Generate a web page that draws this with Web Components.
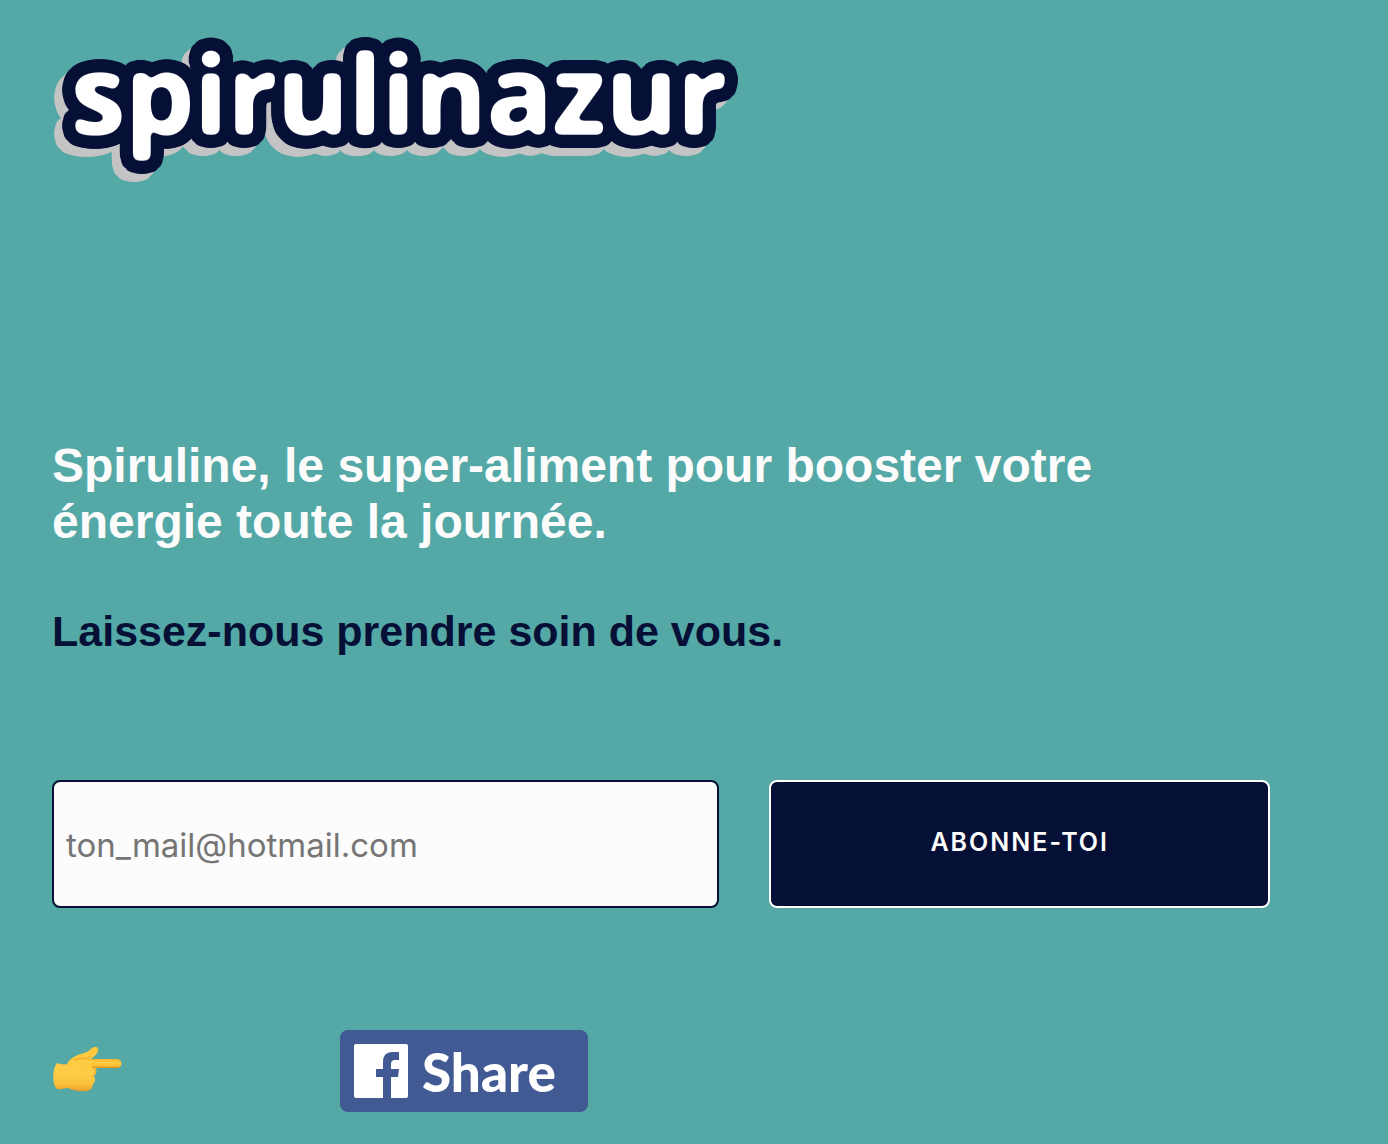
<!DOCTYPE html>
<html lang="fr">
<head>
<meta charset="utf-8">
<meta name="viewport" content="width=device-width, initial-scale=1">
<title>Spirulinazur</title>
<style>
  :root { --teal: #54a8a5; --navy: #060f36; --paper: #fcfcfc; }
  body { margin: 0; background: var(--teal); font-family: "Liberation Sans", Arial, sans-serif; }
</style>
</head>
<body>
<landing-page>
  <brand-logo slot="logo"></brand-logo>
  <hero-copy slot="hero">
    <span>Spiruline, le super-aliment pour booster votre énergie toute la journée.</span>
    <span slot="tagline">Laissez-nous prendre soin de vous.</span>
  </hero-copy>
  <subscribe-form slot="form">Abonne-toi</subscribe-form>
  <share-row slot="share">Share</share-row>
</landing-page>
<script>
class ShadowElement extends HTMLElement {
  constructor() {
    super();
    this.attachShadow({ mode: "open" }).innerHTML = this.constructor.markup;
  }
}

customElements.define("landing-page", class extends ShadowElement {
  static markup = `
    <style>
      :host { display: block; }
      main { display: flex; flex-direction: column; box-sizing: border-box; max-width: 1322px; padding: 24px 52px 32px; }
      header { margin-bottom: 248px; }
      .form { margin: 124px 0 122px; }
    </style>
    <main>
      <header><slot name="logo"></slot></header>
      <slot name="hero"></slot>
      <div class="form"><slot name="form"></slot></div>
      <slot name="share"></slot>
    </main>`;
});

// Copies of the letters on two circles, merged, give an evenly rounded outline.
const ring = [[7, 12], [13, 40]].flatMap(([radius, count]) =>
  Array.from({ length: count }, (_, i) => {
    const angle = (2 * Math.PI * i) / count;
    return [(radius * Math.cos(angle)).toFixed(2), (radius * Math.sin(angle)).toFixed(2)];
  }));

customElements.define("brand-logo", class extends ShadowElement {
  static markup = `
    <style>
      :host { display: block; }
      a { display: block; width: 688px; max-width: 100%; }
      svg { display: block; width: 100%; height: auto; overflow: visible; }
      text { font: 700 109px "Open Sans", sans-serif; fill: #fff; }
    </style>
    <a href="#" aria-label="spirulinazur">
      <svg viewBox="0 0 688 166">
        <!-- Sticker look: softened white letters on a navy outline with a flat grey shadow -->
        <filter id="sticker" filterUnits="userSpaceOnUse" x="-20" y="-20" width="740" height="210" color-interpolation-filters="sRGB">
          <feGaussianBlur in="SourceGraphic" stdDeviation="3" result="soft"/>
          <feFlood flood-color="#fff" result="white"/>
          <feComponentTransfer in="soft" result="mask"><feFuncA type="linear" slope="8" intercept="-2.8"/></feComponentTransfer>
          <feComposite in="white" in2="mask" operator="in" result="face"/>
          ${ring.map(([dx, dy], i) => `<feOffset in="face" dx="${dx}" dy="${dy}" result="r${i}"/>`).join("")}
          <feMerge result="outline"><feMergeNode in="face"/>${ring.map((_, i) => `<feMergeNode in="r${i}"/>`).join("")}</feMerge>
          <feFlood flood-color="#060f36"/>
          <feComposite in2="outline" operator="in" result="edge"/>
          <feOffset in="outline" dx="-8" dy="8" result="moved"/>
          <feFlood flood-color="#c4c4c4"/>
          <feComposite in2="moved" operator="in" result="shade"/>
          <feMerge><feMergeNode in="shade"/><feMergeNode in="edge"/><feMergeNode in="face"/></feMerge>
        </filter>
        <text x="19" y="110" filter="url(#sticker)">spirulinazur</text>
      </svg>
    </a>`;
});

customElements.define("hero-copy", class extends ShadowElement {
  static markup = `
    <style>
      :host { display: block; }
      h1, h2 { margin: 0; font-weight: 700; }
      h1 { font-size: 48px; line-height: 56px; color: var(--paper); }
      h2 { margin-top: 56px; font-size: 43px; line-height: 50px; color: var(--navy); }
    </style>
    <h1><slot></slot></h1>
    <h2><slot name="tagline"></slot></h2>`;
});

customElements.define("subscribe-form", class extends ShadowElement {
  static markup = `
    <style>
      :host { display: block; font-family: Inter, sans-serif; }
      form { display: grid; grid-template-columns: 4fr 3fr; gap: 50px; }
      label { display: flex; min-width: 0; }
      input, button { box-sizing: border-box; height: 128px; margin: 0; border-radius: 8px; font-family: inherit; }
      input { width: 100%; padding: 2px 12px 0; border: 2px solid var(--navy); background: var(--paper); color: var(--navy); font-size: 33px; }
      input::placeholder { color: #757575; opacity: 1; }
      button { padding: 0 0 4px; border: 2px solid #fff; background: var(--navy); color: #fff; font-size: 25px; font-weight: 600; letter-spacing: 2px; text-transform: uppercase; cursor: pointer; }
    </style>
    <form>
      <label><input type="email" placeholder="ton_mail@hotmail.com" aria-label="Adresse e-mail"></label>
      <button type="submit"><slot></slot></button>
    </form>`;
});

customElements.define("share-row", class extends ShadowElement {
  static markup = `
    <style>
      :host { display: flex; align-items: center; gap: 216px; }
      .hand { display: block; width: 72px; height: 48px; }
      a { display: flex; align-items: center; gap: 14px; box-sizing: border-box; width: 248px; height: 82px; padding: 0 14px; border-radius: 8px; background: #415a93; color: #fff; text-decoration: none; font: 900 53px Lato, sans-serif; }
      a svg { flex: none; width: 54px; height: 54px; }
    </style>
    <svg class="hand" viewBox="0 0 72 48" aria-hidden="true">
      <defs>
        <linearGradient id="skin" x1="0" y1="0" x2="0" y2="1">
          <stop offset="0" stop-color="#ffc83a"/><stop offset=".6" stop-color="#ffcd48"/><stop offset=".85" stop-color="#fbc03a"/><stop offset="1" stop-color="#e79d28"/>
        </linearGradient>
        <linearGradient id="finger" x1="0" y1="0" x2="0" y2="1">
          <stop offset="0" stop-color="#f5b52c"/><stop offset=".4" stop-color="#ffcb45"/><stop offset=".7" stop-color="#ffc234"/><stop offset="1" stop-color="#e0921c"/>
        </linearGradient>
      </defs>
      <path fill="url(#skin)" d="M5 16C8 17 12 18 15 17C19 10 25 8 32 6C37 5 39 1 42 0C45 -1 47 2 46 4C44 9 41 10 38 13L43 15V21C45 23 45 27 42 29C44 33 43 35 41 37C40 42 38 44 34 44C27 45 20 43 16 41C12 41 8 43 5 42C0 38 0 22 5 16Z"/>
      <path fill="url(#finger)" d="M34 12H65C71 12 71 21 65 21H34Z"/>
      <path fill="#ffcb43" d="M24 13H40V24H24Z"/>
      <path fill="none" stroke="#e9a229" stroke-width="1" d="M22 13C28 11 34 12 38 10M41 21C44 23 44 27 41 29"/>
    </svg>
    <a href="#">
      <svg viewBox="0 0 54 54" aria-hidden="true">
        <path fill="#fff" d="M2 0H52Q54 0 54 2V52Q54 54 52 54H37V33H44L45 25H37V20Q37 16 41 16H45V8H38Q29 8 29 18V25H22V33H29V54H2Q0 54 0 52V2Q0 0 2 0Z"/>
      </svg>
      <span><slot></slot></span>
    </a>`;
});
</script>
</body>
</html>
